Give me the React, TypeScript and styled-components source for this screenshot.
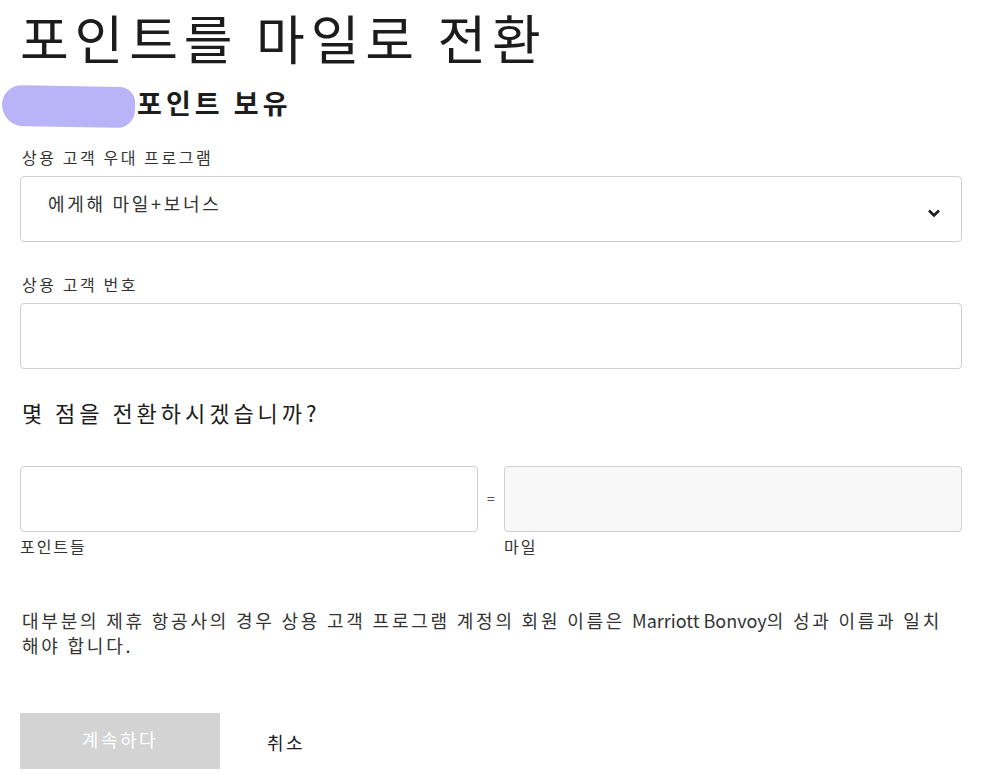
import React from 'react'
import styled, { createGlobalStyle } from 'styled-components'

const GlobalStyle = createGlobalStyle`
  body {
    margin: 0;
    background: #fff;
    font-family: 'Noto Sans CJK KR', 'Noto Sans', sans-serif;
    color: #1c1c1c;
  }
`

const Page = styled.div`
  width: 942px;
  padding: 0 26px 0 20px;
  display: flex;
  flex-direction: column;
`

const Title = styled.h1`
  margin: 0;
  padding-top: 4px;
  font-size: 53px;
  font-weight: 400;
  line-height: 66px;
  letter-spacing: 0.11em;
  color: #1c1c1c;
`

const BalanceRow = styled.div`
  display: flex;
  align-items: center;
  margin: 14px 0 0 -18px;
  height: 44px;
`

const Blob = styled.span`
  width: 133px;
  height: 41px;
  border-radius: 20px 16px 18px 22px;
  background: #b9b4f8;
  transform: rotate(1deg);
`

const BalanceText = styled.span`
  font-size: 27px;
  font-weight: 700;
  margin-left: 2px;
  padding-bottom: 7px;
  letter-spacing: 0.15em;
`

const Field = styled.div`
  display: flex;
  flex-direction: column;
  margin-top: ${p => p.$top}px;
`

const Label = styled.label`
  font-size: 16px;
  color: #333;
  line-height: 22px;
  margin-bottom: 8px;
  padding-left: 2px;
  letter-spacing: 0.16em;
`

const SelectBox = styled.div`
  height: 64px;
  border: 1px solid #cfcfcf;
  border-radius: 4px;
  display: flex;
  align-items: center;
  justify-content: space-between;
  padding: 0 20px 0 27px;
  font-size: 18px;
  color: #333;
`

const SelectText = styled.span`
  margin-top: -12px;
  letter-spacing: 0.15em;
`

const TextInput = styled.div`
  height: 64px;
  border: 1px solid #cfcfcf;
  border-radius: 4px;
  background: ${p => (p.$disabled ? '#f8f8f8' : '#fff')};
`

const Question = styled.h2`
  margin: 28px 0 0;
  padding-left: 2px;
  font-size: 22px;
  font-weight: 400;
  line-height: 30px;
  letter-spacing: 0.18em;
  color: #1c1c1c;
`

const ConvertRow = styled.div`
  display: flex;
  align-items: flex-start;
  margin-top: 39px;
`

const ConvertCol = styled.div`
  display: flex;
  flex-direction: column;
  flex: 1;
`

const Equals = styled.span`
  width: 26px;
  text-align: center;
  font-size: 14px;
  color: #555;
  padding-top: 22px;
`

const SubLabel = styled.span`
  font-size: 16px;
  color: #333;
  line-height: 24px;
  margin-top: 2px;
  letter-spacing: 0.12em;
`

const Note = styled.p`
  margin: 50px 0 0;
  padding: 0 8px 0 2px;
  font-size: 18px;
  line-height: 25px;
  letter-spacing: 0.155em;
  color: #333;
`

const Brand = styled.span`
  letter-spacing: 0;
`

const Actions = styled.div`
  display: flex;
  align-items: center;
  margin-top: 55px;
  gap: 47px;
`

const PrimaryButton = styled.button`
  width: 200px;
  height: 56px;
  border: none;
  background: #d3d3d3;
  color: #fff;
  font-family: inherit;
  font-size: 18px;
  letter-spacing: 0.14em;
  padding-bottom: 6px;
`

const CancelButton = styled.button`
  border: none;
  background: none;
  font-family: inherit;
  font-size: 18px;
  letter-spacing: 0.14em;
  color: #1c1c1c;
  padding: 2px 0 0;
`

function Chevron() {
  return (
    <svg width="14" height="10" viewBox="0 0 14 10" style={{ marginTop: 8 }}>
      <path d="M2 2.5 L7 7.5 L12 2.5" stroke="#1c1c1c" strokeWidth="2.6" fill="none" />
    </svg>
  )
}

export default function App() {
  return (
    <>
      <GlobalStyle />
      <Page>
        <Title>포인트를 마일로 전환</Title>
        <BalanceRow>
          <Blob />
          <BalanceText>포인트 보유</BalanceText>
        </BalanceRow>

        <Field $top={18}>
          <Label>상용 고객 우대 프로그램</Label>
          <SelectBox>
            <SelectText>에게해 마일+보너스</SelectText>
            <Chevron />
          </SelectBox>
        </Field>

        <Field $top={31}>
          <Label>상용 고객 번호</Label>
          <TextInput />
        </Field>

        <Question>몇 점을 전환하시겠습니까?</Question>

        <ConvertRow>
          <ConvertCol>
            <TextInput />
            <SubLabel>포인트들</SubLabel>
          </ConvertCol>
          <Equals>=</Equals>
          <ConvertCol>
            <TextInput $disabled />
            <SubLabel>마일</SubLabel>
          </ConvertCol>
        </ConvertRow>

        <Note>
          대부분의 제휴 항공사의 경우 상용 고객 프로그램 계정의 회원 이름은 <Brand>Marriott Bonvoy</Brand>의 성과
          이름과 일치해야 합니다.
        </Note>

        <Actions>
          <PrimaryButton>계속하다</PrimaryButton>
          <CancelButton>취소</CancelButton>
        </Actions>
      </Page>
    </>
  )
}
